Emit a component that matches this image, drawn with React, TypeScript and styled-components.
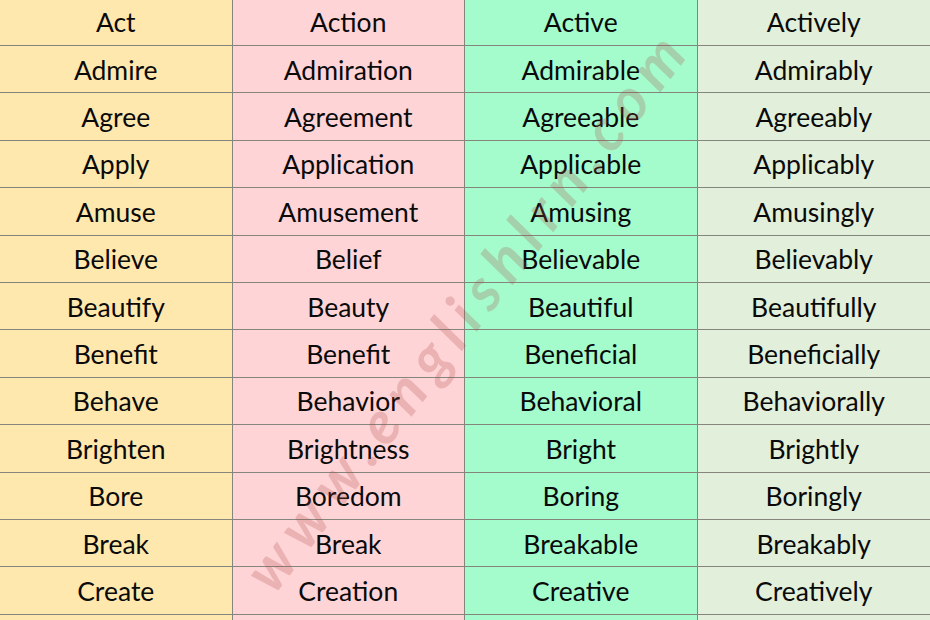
import React from "react";
import styled, { createGlobalStyle } from "styled-components";

const Global = createGlobalStyle`
  html, body { margin: 0; padding: 0; overflow: hidden; background: #ffffff; }
  body { width: 930px; height: 620px; }
`;

const Page = styled.div`
  position: relative;
  width: 930px;
  height: 620px;
  overflow: hidden;
`;

const Table = styled.div`
  display: grid;
  grid-template-columns: repeat(4, 1fr);
  grid-auto-rows: 47.4px;
  margin-top: -1.4px;
`;

const colors = ["#FFE8AD", "#FFD4D6", "#A4FCCC", "#E2EFDA"];

const Cell = styled.div<{ $col: number }>`
  display: flex;
  align-items: center;
  justify-content: center;
  background: ${(p) => colors[p.$col]};
  border-bottom: 1px solid #85857d;
  border-right: ${(p) => (p.$col < 3 ? "1px solid #85857d" : "none")};
  box-sizing: border-box;
  font-family: Lato, "Liberation Sans", sans-serif;
  font-size: 26.5px;
  color: #0a0a0a;
  padding-top: 1px;
`;

const Watermark = styled.div`
  position: absolute;
  left: 466px;
  top: 308px;
  transform: translate(-50%, -50%) rotate(-52.5deg);
  font-family: Lato, "DejaVu Sans", sans-serif;
  font-style: italic;
  font-weight: 700;
  font-size: 60px;
  line-height: 1;
  letter-spacing: 10px;
  white-space: nowrap;
  color: rgba(170, 70, 70, 0.24);
  pointer-events: none;
`;

const rows: string[][] = [
  ["Act", "Action", "Active", "Actively"],
  ["Admire", "Admiration", "Admirable", "Admirably"],
  ["Agree", "Agreement", "Agreeable", "Agreeably"],
  ["Apply", "Application", "Applicable", "Applicably"],
  ["Amuse", "Amusement", "Amusing", "Amusingly"],
  ["Believe", "Belief", "Believable", "Believably"],
  ["Beautify", "Beauty", "Beautiful", "Beautifully"],
  ["Benefit", "Benefit", "Beneficial", "Beneficially"],
  ["Behave", "Behavior", "Behavioral", "Behaviorally"],
  ["Brighten", "Brightness", "Bright", "Brightly"],
  ["Bore", "Boredom", "Boring", "Boringly"],
  ["Break", "Break", "Breakable", "Breakably"],
  ["Create", "Creation", "Creative", "Creatively"],
  ["", "", "", ""],
];

export default function App() {
  return (
    <Page>
      <Global />
      <Table>
        {rows.map((r, i) =>
          r.map((w, j) => (
            <Cell key={`${i}-${j}`} $col={j}>
              {w}
            </Cell>
          ))
        )}
      </Table>
      <Watermark>www.englishlrn.com</Watermark>
    </Page>
  );
}
